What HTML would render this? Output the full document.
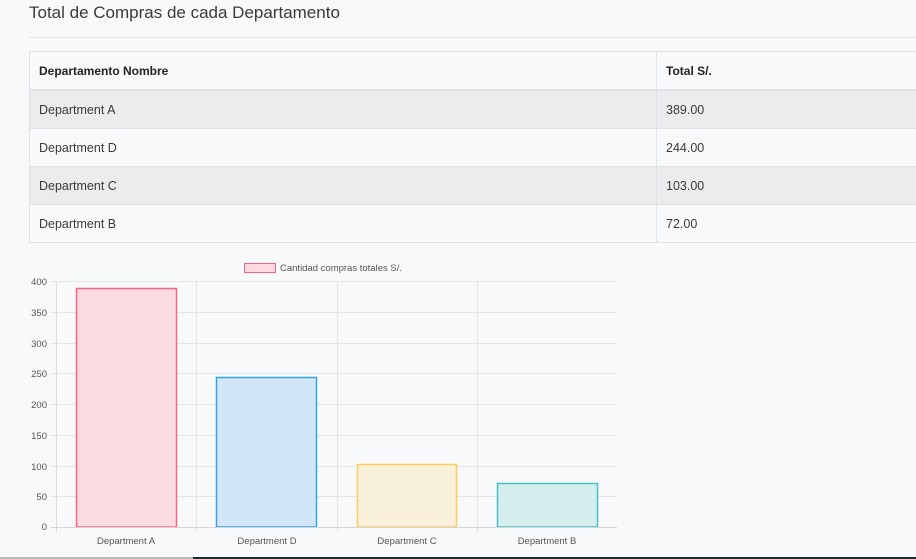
<!DOCTYPE html><html><head><style>
body{margin:0;width:916px;height:559px;background:#f8f9fb;font-family:"Liberation Sans",sans-serif;overflow:hidden;position:relative}
h1{position:absolute;left:29px;top:3px;margin:0;font-weight:normal;font-size:17px;color:#3a3a3a}
.hr{position:absolute;left:29px;top:37px;width:887px;height:1px;background:#e3e5e8}
table{position:absolute;left:29px;top:51px;width:900px;border-collapse:collapse;font-size:12.5px;color:#3a3a3a}
td{border:1px solid #dfe2e6;height:37px;padding:0 9px}
tr.h td{font-weight:bold;font-size:12px;border-bottom:2px solid #dfe2e6;color:#222}
tr.g td{background:#ececee}
.bl{position:absolute;left:0;bottom:0;width:193px;height:2px;background:#bbb}
.bd{position:absolute;left:193px;bottom:0;width:723px;height:2px;background:#1f2a2a}
</style></head><body>
<h1>Total de Compras de cada Departamento</h1>
<div class="hr"></div>
<table>
<tr class="h"><td style="width:608px">Departamento Nombre</td><td>Total S/.</td></tr>
<tr class="g"><td>Department A</td><td>389.00</td></tr>
<tr><td>Department D</td><td>244.00</td></tr>
<tr class="g"><td>Department C</td><td>103.00</td></tr>
<tr><td>Department B</td><td>72.00</td></tr>
</table>
<svg style="position:absolute;left:0;top:0" width="916" height="559" font-family="Liberation Sans,sans-serif" font-size="9.5" fill="#555">
<rect x="244.5" y="263.5" width="31" height="9" fill="#fadbe2" stroke="#ff6384"/>
<text x="280" y="271">Cantidad compras totales S/.</text>
<g stroke="#e5e5e5" stroke-width="1">
<line x1="51" x2="617" y1="281.5" y2="281.5"/><line x1="51" x2="617" y1="312.5" y2="312.5"/><line x1="51" x2="617" y1="343.5" y2="343.5"/><line x1="51" x2="617" y1="373.5" y2="373.5"/><line x1="51" x2="617" y1="404.5" y2="404.5"/><line x1="51" x2="617" y1="435.5" y2="435.5"/><line x1="51" x2="617" y1="466.5" y2="466.5"/><line x1="51" x2="617" y1="496.5" y2="496.5"/>
<line x1="56.5" x2="56.5" y1="281" y2="532" stroke="#ddd"/><line x1="196.5" x2="196.5" y1="281" y2="532"/><line x1="337.5" x2="337.5" y1="281" y2="532"/><line x1="477.5" x2="477.5" y1="281" y2="532"/>
</g>
<rect x="76.5" y="288.5" width="100" height="238.5" fill="#fadbe2" stroke="#ff6384" stroke-width="1.5"/>
<rect x="216.5" y="377.5" width="100" height="149.5" fill="#d1e7f7" stroke="#36a2eb" stroke-width="1.5"/>
<rect x="357.5" y="464.5" width="99" height="62.5" fill="#f9f0dc" stroke="#ffce56" stroke-width="1.5"/>
<rect x="497.5" y="483.5" width="100" height="43.5" fill="#d5eeee" stroke="#4bc0c0" stroke-width="1.5"/>
<line x1="51" x2="617" y1="527.5" y2="527.5" stroke="#d5d5d5"/>
<g text-anchor="end"><text x="47" y="285">400</text><text x="47" y="316">350</text><text x="47" y="347">300</text><text x="47" y="377">250</text><text x="47" y="408">200</text><text x="47" y="439">150</text><text x="47" y="470">100</text><text x="47" y="500">50</text><text x="47" y="530">0</text></g>
<g text-anchor="middle"><text x="126" y="544">Department A</text><text x="267" y="544">Department D</text><text x="407" y="544">Department C</text><text x="547" y="544">Department B</text></g>
</svg>
<div class="bl"></div><div class="bd"></div>
</body></html>
